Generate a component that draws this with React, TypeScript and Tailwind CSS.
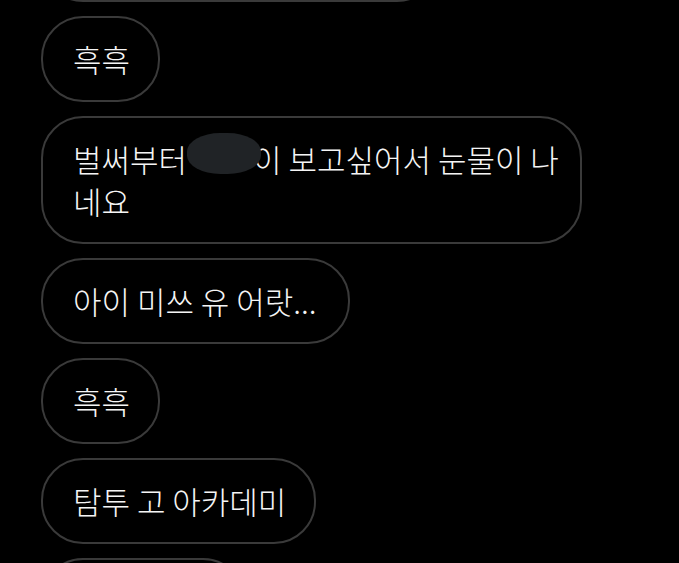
const bubble =
  'rounded-[42px] border-2 border-[#3a3a3a] px-[30px] py-[20px] text-[31px] font-light leading-[42px] whitespace-nowrap text-[#f5f5f5]'

function Bubble({ children, width }: { children?: React.ReactNode; width: string }) {
  return <div className={`${bubble} ${width}`}>{children}</div>
}

export default function App() {
  return (
    <div
      className="h-[563px] w-[679px] overflow-hidden bg-black pl-[41px]"
      style={{ fontFamily: '"Noto Sans CJK KR", "Noto Sans", sans-serif' }}
    >
      <div className="-mt-[84px] flex flex-col gap-[14px]">
        <Bubble width="w-[398px]">&nbsp;</Bubble>
        <Bubble width="w-[119px]">흑흑</Bubble>
        <Bubble width="w-[541px]">
          벌써부터
          <span className="relative inline-block h-0 w-[66px]">
            <span className="absolute top-[-39px] left-0 h-[41px] w-[74px] rounded-[45%] bg-[#202326]" />
          </span>
          이 보고싶어서 눈물이 나
          <br />
          네요
        </Bubble>
        <Bubble width="w-[309px]">아이 미쓰 유 어랏...</Bubble>
        <Bubble width="w-[119px]">흑흑</Bubble>
        <Bubble width="w-[275px]">탐투 고 아카데미</Bubble>
        <Bubble width="w-[204px]">&nbsp;</Bubble>
      </div>
    </div>
  )
}
